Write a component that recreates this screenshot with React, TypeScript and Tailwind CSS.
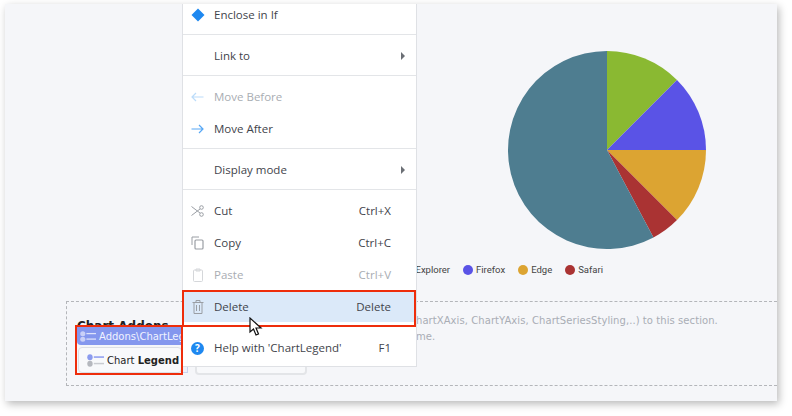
import { ReactNode } from "react";

const sans = "font-['Open_Sans',sans-serif]";

function Sep() {
  return <div className="my-1 h-px bg-[#e3e5e8]" />;
}

function Row({ icon, label, shortcut, arrow, muted, active }: { icon?: ReactNode; label: string; shortcut?: string; arrow?: boolean; muted?: boolean; active?: boolean }) {
  return (
    <div className={`flex h-8 items-center pt-[2px] text-[11.5px] ${active ? "bg-[#dbe9f9]" : ""} ${muted ? "text-[#a9adb3]" : "text-[#3f444b]"}`}>
      <div className="flex w-[31px] shrink-0 justify-center pr-[2px]">{icon}</div>
      <span className="flex-1">{label}</span>
      {shortcut && <span className="pr-[25px]">{shortcut}</span>}
      {arrow && <span className="mr-[11px] h-0 w-0 border-y-[4px] border-l-[4px] border-y-transparent border-l-[#6b6f75]" />}
    </div>
  );
}

function ArrowIcon({ left, color }: { left?: boolean; color: string }) {
  return (
    <svg width="13" height="10" viewBox="0 0 13 10" fill="none" stroke={color} strokeWidth="1.2">
      {left ? <path d="M12.5 5H1M5 1L1 5l4 4" /> : <path d="M0.5 5H12M8 1l4 4-4 4" />}
    </svg>
  );
}

function LegendIcon({ light }: { light?: boolean }) {
  return (
    <svg className="shrink-0" width={light ? 16 : 17} height={light ? 11 : 13} viewBox="0 0 20 14" preserveAspectRatio="none">
      <circle cx="3.5" cy="3.5" r="3.2" fill={light ? "#c9d0f7" : "#8b9bef"} />
      <circle cx="3.5" cy="10.5" r="3.2" fill={light ? "#c9d0f7" : "#b5b8be"} />
      <rect x="8" y="2.5" width="12" height="1.6" fill={light ? "#dfe4fb" : "#8b9bef"} />
      <rect x="8" y="9.5" width="12" height="1.6" fill={light ? "#dfe4fb" : "#c9cbd0"} />
    </svg>
  );
}

function PieChart() {
  const c = 99;
  const pt = (deg: number) => {
    const a = (deg * Math.PI) / 180;
    return `${c + c * Math.sin(a)} ${c - c * Math.cos(a)}`;
  };
  const slices = [
    { from: 0, to: 45, fill: "#8ab932" },
    { from: 45, to: 90, fill: "#5a53e6" },
    { from: 90, to: 135, fill: "#dca432" },
    { from: 135, to: 152, fill: "#aa3333" },
    { from: 152, to: 360, fill: "#4e7d90" },
  ];
  return (
    <svg width="198" height="198" viewBox="0 0 198 198">
      {slices.map((s) => (
        <path key={s.fill} fill={s.fill} d={`M${c} ${c}L${pt(s.from)}A${c} ${c} 0 ${s.to - s.from > 180 ? 1 : 0} 1 ${pt(s.to)}Z`} />
      ))}
    </svg>
  );
}

function LegendEntry({ color, label }: { color: string; label: string }) {
  return (
    <div className="flex items-center gap-[3px]">
      <span className="h-[10px] w-[10px] rounded-full" style={{ backgroundColor: color }} />
      <span>{label}</span>
    </div>
  );
}

export default function App() {
  return (
    <div className={`relative h-[416px] w-[792px] overflow-hidden bg-white ${sans}`}>
      <div className="ml-[5px] mt-[4px] flex h-[397px] w-[772px] flex-col bg-[#f5f6f9] shadow-[2px_3px_8px_rgba(0,0,0,0.28)]">
        {/* chart */}
        <div className="flex h-[297px] flex-col pl-[503px] pt-[47px]">
          <PieChart />
          <div className="mr-[174px] mt-[14px] flex gap-[13px] self-end whitespace-nowrap font-['Roboto',sans-serif] text-[9.5px] text-[#444]">
            <span>Explorer</span>
            <LegendEntry color="#5a53e6" label="Firefox" />
            <LegendEntry color="#dca432" label="Edge" />
            <LegendEntry color="#aa3333" label="Safari" />
          </div>
        </div>

        {/* addons section */}
        <div className="ml-[61px] flex h-[85px] border-y border-l border-dashed border-[#b4b6ba] pl-[10px] pt-[11px] font-['DejaVu_Sans',sans-serif]">
          <div className="mt-[6px] w-[339px] shrink-0 whitespace-nowrap text-[12px] font-bold leading-[15px] text-[#222]">Chart Addons</div>
          <div className="whitespace-nowrap text-[10px] leading-[16px] tracking-[0.07px] text-[#a9adb5]">
            <div>hartXAxis, ChartYAxis, ChartSeriesStyling,..) to this section.</div>
            <div>me.</div>
          </div>
        </div>
      </div>

      {/* boxes behind selection */}
      <div className="absolute left-[183px] top-[366px] h-[7px] w-[5px] border-b border-r border-[#c9d3ee] bg-[#eef1fa]" />
      <div className="absolute left-[195px] top-[350px] h-[25px] w-[112px] rounded-b border-2 border-[#e3e5e8] bg-[#f8f9fb]" />

      {/* selected component */}
      <div className="absolute left-[77px] top-[327px] w-[105px] font-['DejaVu_Sans',sans-serif] text-[10px]">
        <div className="flex h-[18px] items-center gap-[3px] overflow-hidden whitespace-nowrap rounded-bl bg-[#8497ee] pl-[3px] text-[#f1f3ff]">
          <LegendIcon light />
          <span>Addons\ChartLegend</span>
        </div>
        <div className="ml-[1px] mt-[2px] flex h-[26px] items-center gap-[3px] whitespace-nowrap rounded-sm border border-[#dcdfe6] bg-[#f8f9fb] pl-[8px] text-[#222]">
          <LegendIcon />
          <span>Chart <b>Legend</b></span>
        </div>
      </div>

      {/* context menu */}
      <div className="absolute left-[182px] top-[4px] h-[363px] w-[235px] overflow-hidden border border-t-0 border-[#dfe1e5] bg-white">
        <div className="-mt-[6px]">
          <Row label="Enclose in If" icon={<svg width="14" height="14" viewBox="0 0 14 14"><path d="M7 0.5L13.5 7 7 13.5 0.5 7Z" fill="#1e88f0" /></svg>} />
          <Sep />
          <Row label="Link to" arrow />
          <Sep />
          <Row label="Move Before" muted icon={<ArrowIcon left color="#bcdcfa" />} />
          <Row label="Move After" icon={<ArrowIcon color="#58a8f5" />} />
          <Sep />
          <Row label="Display mode" arrow />
          <Sep />
          <Row label="Cut" shortcut="Ctrl+X" icon={
            <svg width="13" height="12" viewBox="0 0 13 12" fill="none" stroke="#9a9ea4"><circle cx="10.5" cy="2.5" r="1.8" /><circle cx="10.5" cy="9.5" r="1.8" /><path d="M0.5 1.5L9 8M0.5 10.5L9 4" /></svg>
          } />
          <Row label="Copy" shortcut="Ctrl+C" icon={
            <svg width="13" height="14" viewBox="0 0 13 14" fill="none" stroke="#9a9ea4"><rect x="4" y="4" width="8" height="9" rx="1" strokeWidth="1.2" /><path d="M1 9V1h7" /></svg>
          } />
          <Row label="Paste" shortcut="Ctrl+V" muted icon={
            <svg width="12" height="14" viewBox="0 0 12 14" fill="none" stroke="#d5d7da"><rect x="1.5" y="2" width="9" height="11.5" rx="1" /><path d="M4 1h4v2H4z" /></svg>
          } />
          <Row label="Delete" shortcut="Delete" active icon={
            <svg width="12" height="14" viewBox="0 0 12 14" fill="none" stroke="#9a9ea4"><path d="M0.5 2.5h11M4 2.5v-2h4v2M2 2.5v11h8v-11M4.5 5v6M7.5 5v6" /></svg>
          } />
          <Sep />
          <Row label="Help with 'ChartLegend'" shortcut="F1" icon={
            <div className="flex h-[13px] w-[13px] items-center justify-center rounded-full bg-[#1e88f0] text-[10px] font-bold text-white">?</div>
          } />
        </div>
      </div>

      {/* red highlight boxes */}
      <div className="absolute left-[182px] top-[290px] h-[37px] w-[234px] border-2 border-[#ee2d0b]" />
      <div className="absolute left-[75px] top-[325px] h-[50px] w-[108px] border-2 border-[#ee2d0b]" />

      {/* cursor */}
      <svg className="absolute left-[249px] top-[317px]" width="14" height="20" viewBox="0 0 14 20">
        <path d="M1 1v14l3.5-3 2.5 6 2.5-1-2.5-6h5Z" fill="#fff" stroke="#111" strokeWidth="1.2" />
      </svg>
    </div>
  );
}
